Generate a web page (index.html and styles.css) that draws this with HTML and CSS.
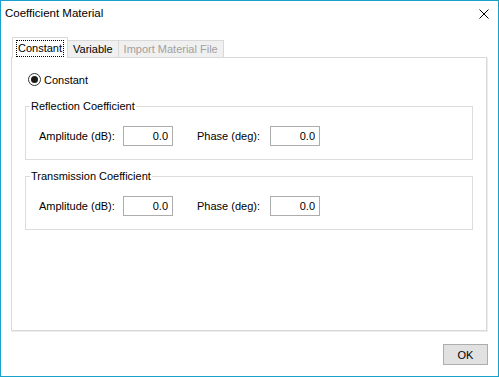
FILE: index.html
```html
<!DOCTYPE html>
<html lang="en">
<head>
    <meta charset="UTF-8">
    <title>Coefficient Material</title>
    <link rel="stylesheet" href="styles.css">
</head>
<body>
    <div class="window">
        <div class="titlebar">
            <span class="title">Coefficient Material</span>
            <span class="close">
                <svg width="10" height="10" viewBox="0 0 10 10">
                    <path d="M0.5 0.5 L9.5 9.5 M9.5 0.5 L0.5 9.5" stroke="#000" stroke-width="1" fill="none"/>
                </svg>
            </span>
        </div>

        <div class="tabs">
            <div class="tab active"><span class="focus">Constant</span></div>
            <div class="tab">Variable</div>
            <div class="tab disabled">Import Material File</div>
        </div>

        <div class="panel">
            <label class="radio">
                <span class="radio-circle"><span class="radio-dot"></span></span>
                Constant
            </label>

            <fieldset class="group">
                <legend>Reflection Coefficient</legend>
                <div class="row">
                    <span class="lbl amp">Amplitude (dB):</span>
                    <input class="num" type="text" value="0.0">
                    <span class="lbl phase">Phase (deg):</span>
                    <input class="num" type="text" value="0.0">
                </div>
            </fieldset>

            <fieldset class="group">
                <legend>Transmission Coefficient</legend>
                <div class="row">
                    <span class="lbl amp">Amplitude (dB):</span>
                    <input class="num" type="text" value="0.0">
                    <span class="lbl phase">Phase (deg):</span>
                    <input class="num" type="text" value="0.0">
                </div>
            </fieldset>
        </div>

        <div class="footer">
            <button class="ok">OK</button>
        </div>
    </div>
</body>
</html>
```

FILE: styles.css
```css
body {
    margin: 0;
    font-family: 'Liberation Sans', Arial, sans-serif;
    font-size: 11px;
    color: #000000;
    background-color: #ffffff;
}

.window {
    width: 499px;
    height: 377px;
    box-sizing: border-box;
    border: 1px solid #1aa1cb;
    background-color: #ffffff;
    display: flex;
    flex-direction: column;
}

.titlebar {
    height: 24px;
    display: flex;
    align-items: center;
    justify-content: space-between;
    padding: 0 9px 0 4px;
}

.title {
    font-size: 11.5px;
}

.close {
    display: flex;
    margin-top: 1px;
}

/* tab strip */
.tabs {
    display: flex;
    align-items: flex-end;
    margin: 13px 0 0 11px;
    height: 19px;
}

.tab {
    height: 16px;
    line-height: 16px;
    padding: 0 5px;
    border: 1px solid #d9d9d9;
    border-bottom: none;
    background-color: #f0f0f0;
    margin-left: -1px;
}

.tab.active {
    height: 20px;
    line-height: 20px;
    padding: 0 3px;
    background-color: #ffffff;
    margin-left: 0;
    margin-bottom: -1px;
    position: relative;
    z-index: 1;
}

.tab.disabled {
    color: #a0a0a0;
}

.focus {
    display: inline-block;
    height: 15px;
    line-height: 15px;
    padding: 0 1px;
    border: 1px dotted #000000;
    vertical-align: top;
    margin-top: 2px;
}

.panel {
    margin: 0 11px 0 10px;
    height: 274px;
    box-sizing: border-box;
    border: 1px solid #d9d9d9;
    box-shadow: 1px 1px 0 #ececec;
    background-color: #ffffff;
    padding: 15px 13px 0 13px;
}

.radio {
    display: flex;
    align-items: center;
    gap: 3px;
    height: 13px;
    margin-left: 3px;
}

.radio-circle {
    width: 11px;
    height: 11px;
    border: 1px solid #333333;
    border-radius: 50%;
    display: flex;
    align-items: center;
    justify-content: center;
}

.radio-dot {
    width: 7px;
    height: 7px;
    border-radius: 50%;
    background-color: #1a1a1a;
}

.group {
    margin: 13px 0 0 0;
    padding: 13px 13px 13px 13px;
    border: 1px solid #dcdcdc;
    min-width: 0;
}

.group + .group {
    margin-top: 9px;
}

legend {
    padding: 0 1px;
    margin-left: -9px;
    line-height: 14px;
}

.row {
    display: flex;
    align-items: center;
}

.lbl.amp {
    width: 84px;
}

.lbl.phase {
    width: 73px;
}

.num {
    width: 50px;
    height: 20px;
    box-sizing: border-box;
    border: 1px solid #adadad;
    padding: 0 4px 0 0;
    text-align: right;
    font-family: 'Liberation Sans', Arial, sans-serif;
    font-size: 11px;
    color: #000000;
    margin-right: 24px;
    outline: none;
}

.footer {
    display: flex;
    justify-content: flex-end;
    padding: 13px 10px 0 0;
}

.ok {
    width: 45px;
    height: 21px;
    background-color: #e1e1e1;
    border: 1px solid #adadad;
    font-family: 'Liberation Sans', Arial, sans-serif;
    font-size: 11px;
    color: #000000;
    padding: 0;
}
```
